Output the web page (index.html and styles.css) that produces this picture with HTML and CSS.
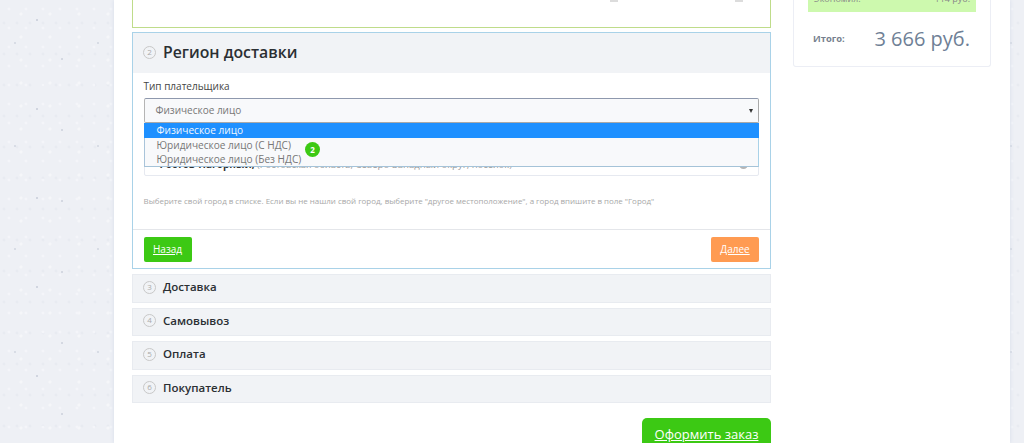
FILE: index.html
```html
<!DOCTYPE html>
<html lang="ru">
<head>
<meta charset="utf-8">
<title>Оформление заказа</title>
<link rel="stylesheet" href="styles.css">
</head>
<body>
<div class="sheet">
  <main class="main">
    <section class="done-card"><span class="mark"></span><span class="mark"></span></section>
    <section class="step step-open">
      <header class="step-head"><span class="num">2</span><h2>Регион доставки</h2></header>
      <div class="step-body">
        <label class="label">Тип плательщика</label>
        <div class="select-wrap">
          <div class="select"><span>Физическое лицо</span><i class="arrow"></i></div>
          <ul class="options">
            <li class="active">Физическое лицо</li>
            <li>Юридическое лицо (С НДС)</li>
            <li>Юридическое лицо (Без НДС)</li>
          </ul>
          <span class="badge">2</span>
        </div>
        <div class="city"><b>Ростов-Нагорный,</b> <span>(Ростовская область, Северо-Западный округ, посёлок)</span><i class="city-dot"></i></div>
        <p class="hint">Выберите свой город в списке. Если вы не нашли свой город, выберите "другое местоположение", а город впишите в поле "Город"</p>
      </div>
      <footer class="step-foot">
        <a class="btn btn-green" href="#">Назад</a>
        <a class="btn btn-orange" href="#">Далее</a>
      </footer>
    </section>
    <section class="step"><header class="step-head small"><span class="num">3</span><h3>Доставка</h3></header></section>
    <section class="step"><header class="step-head small"><span class="num">4</span><h3>Самовывоз</h3></header></section>
    <section class="step"><header class="step-head small"><span class="num">5</span><h3>Оплата</h3></header></section>
    <section class="step"><header class="step-head small"><span class="num">6</span><h3>Покупатель</h3></header></section>
    <div class="order-row"><a class="order" href="#">Оформить заказ</a></div>
  </main>
  <aside class="side">
    <div class="summary">
      <div class="saved"><div class="saved-row"><span>Экономия:</span><span>114 руб.</span></div></div>
      <div class="total"><span class="total-label">Итого:</span><span class="total-sum">3 666 руб.</span></div>
    </div>
  </aside>
</div>
</body>
</html>
```
FILE: styles.css
```css
* { box-sizing: border-box; }
html, body { margin: 0; height: 100%; }
body {
  overflow: hidden;
  background-color: #eef0f5;
  background-image:
    radial-gradient(circle at 37px 20px, #c9cdd9 0.6px, transparent 1.1px),
    radial-gradient(circle at 62px 59px, #cdd1dc 0.6px, transparent 1.1px),
    radial-gradient(circle at 15px 43px, #d2d6e0 0.6px, transparent 1.1px),
    radial-gradient(circle at 9px 9px, #f4f5f9 1px, transparent 1.8px),
    radial-gradient(circle at 21px 14px, #f5f6f9 1.2px, transparent 2px),
    radial-gradient(circle at 4px 23px, #e8ebf1 1px, transparent 1.8px);
  background-size: 113px 89px, 97px 71px, 83px 103px, 17px 19px, 29px 23px, 13px 31px;
  font-family: "Open Sans", "Noto Sans", sans-serif;
  color: #333;
}
.sheet {
  width: 896px;
  height: 443px;
  margin-left: 114px;
  padding-left: 18px;
  background: #fff;
  box-shadow: 0 0 4px #d5dcea;
  display: flex;
  align-items: flex-start;
}
.main { width: 639px; display: flex; flex-direction: column; }
.done-card {
  height: 28px;
  border: 1px solid #bfdc8a;
  border-top: 0;
  display: flex;
  justify-content: flex-end;
  gap: 117px;
  padding-right: 27px;
}
.mark { width: 8px; height: 2px; background: #dcdcdc; }
.step {
  margin-top: 5px;
  border: 1px solid #e8ebf0;
  background: #f1f3f6;
  height: 28.5px;
}
.done-card + .step { margin-top: 4px; }
.step-open {
  height: 237px;
  border-color: #a9d2e8;
  background: #fff;
  display: flex;
  flex-direction: column;
}
.step-head {
  background: #f1f3f6;
  height: 40px;
  display: flex;
  align-items: center;
  padding: 0 0 2px 10px;
  flex: none;
}
.step-head.small { height: 26.5px; }
h2, h3 { margin: 0; color: #2b2f33; font-weight: 600; margin-left: 7px; }
h2 { font-size: 15.8px; line-height: 30px; }
h3 { font-size: 11.5px; line-height: 20px; }
.num {
  width: 13px;
  height: 13px;
  border: 1.5px solid #c8c8c8;
  border-radius: 50%;
  color: #aaa;
  font-size: 8px;
  line-height: 10px;
  text-align: center;
  flex: none;
}
.step-body { flex: 1; padding: 6px 11px 0 10.5px; }
.label { display: block; font-size: 10px; line-height: 14px; color: #444; }
.select-wrap { position: relative; margin-top: 5px; }
.select {
  height: 25px;
  border: 1px solid #8e98ad;
  border-right-color: #a9a9a9;
  border-left-color: #b5b5b5;
  border-bottom-color: #a9a9a9;
  background: #f8f9fb;
  color: #777;
  font-size: 10px;
  line-height: 25px;
  padding-left: 11px;
  display: flex;
  justify-content: space-between;
  align-items: center;
  border-radius: 2px;
}
.arrow {
  width: 0;
  height: 0;
  border-left: 2px solid transparent;
  border-right: 2px solid transparent;
  border-top: 4px solid #333;
  margin-right: 5px;
}
.options {
  position: absolute;
  z-index: 2;
  left: 0;
  right: 0;
  top: 25px;
  margin: 0;
  padding: 0;
  list-style: none;
  background: #f8f9fb;
  border: 1px solid #a9d2e8;
  border-top: 0;
  border-left-color: #a9c4da;
  border-bottom-color: #a5c3d8;
  height: 44px;
  font-size: 10.1px;
  color: #777;
}
.options li { height: 14.2px; line-height: 14.2px; padding-left: 12px; }
.options li.active { background: #1e90ff; color: #f2f7fd; height: 15px; line-height: 15px; margin: 0 -1px; padding-left: 13px; }
.badge {
  position: absolute;
  z-index: 3;
  left: 161.5px;
  top: 44px;
  width: 15px;
  height: 15px;
  border-radius: 50%;
  background: #3cc914;
  color: #fff;
  font-size: 8px;
  font-weight: 700;
  line-height: 15px;
  text-align: center;
}
.city {
  position: relative;
  height: 25px;
  margin-top: 28px;
  padding-left: 15px;
  border: 1px solid #e6e9f0;
  border-radius: 2px;
  font-size: 9.5px;
  line-height: 25px;
  color: #999;
  white-space: nowrap;
  overflow: hidden;
}
.city b { color: #333; font-size: 10px; }
.city-dot { position: absolute; right: 10px; top: 8px; width: 9px; height: 9px; border-radius: 50%; background: #b5b5b5; }
.hint { margin: 20px 0 0; font-size: 7.95px; line-height: 11px; color: #a8a8a8; white-space: nowrap; }
.step-foot {
  height: 39px;
  border-top: 1px solid #e4e6ea;
  display: flex;
  justify-content: space-between;
  align-items: flex-start;
  padding: 7px 11px 0 10.5px;
  flex: none;
}
.btn {
  width: 48px;
  height: 25px;
  border-radius: 2px;
  color: #fff;
  font-size: 10px;
  line-height: 25px;
  text-align: center;
}
.btn-green { background: #3cc914; }
.btn-orange { background: #ff9b52; }
.order-row { display: flex; justify-content: flex-end; margin-top: 15px; }
.order {
  width: 129px;
  height: 25px;
  padding-top: 8px;
  background: #3cc914;
  border-radius: 5px 5px 0 0;
  color: #fff;
  font-size: 13px;
  line-height: 17px;
  text-align: center;
}
.side { width: 198px; margin-left: 22px; }
.summary {
  height: 67px;
  border: 1px solid #eceef5;
  border-top: 0;
  border-radius: 0 0 3px 3px;
  padding: 0 14px;
}
.saved {
  height: 12px;
  background: #cdf9ae;
  display: flex;
  flex-direction: column;
  justify-content: flex-end;
  overflow: hidden;
  padding: 0 6px;
}
.saved-row {
  flex: none;
  display: flex;
  justify-content: space-between;
  font-size: 9px;
  line-height: 13px;
  color: #888;
  padding-bottom: 7px;
}
.total { display: flex; align-items: center; justify-content: space-between; margin-top: 13px; padding: 0 6px 0 5px; }
.total-label { font-size: 9.4px; font-weight: 700; color: #767f8e; }
.total-sum { font-size: 20px; color: #6f7f96; line-height: 27px; }
```
